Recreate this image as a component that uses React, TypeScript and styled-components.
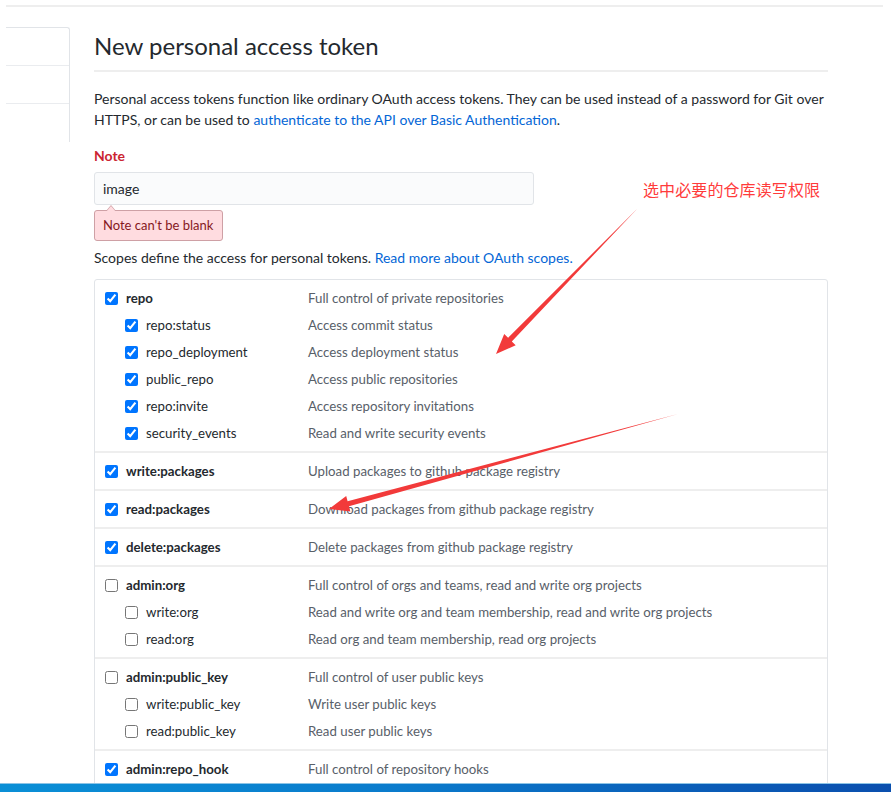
import React from "react";
import styled, { createGlobalStyle } from "styled-components";

const GlobalStyle = createGlobalStyle`
  html, body {
    margin: 0;
    padding: 0;
    background: #ffffff;
    overflow: hidden;
  }
  body {
    font-family: Lato, "Noto Sans", "Liberation Sans", sans-serif;
    font-size: 14px;
    color: #24292e;
  }
  * { box-sizing: border-box; }
`;

const Page = styled.div`
  display: flex;
  flex-direction: column;
  width: 891px;
  height: 801px;
`;

const Screen = styled.div`
  position: relative;
  height: 783px;
  overflow: hidden;
`;

const TopRule = styled.div`
  height: 2px;
  margin: 5px 8px 0 6px;
  background: #eeeeee;
`;

const Layout = styled.div`
  display: flex;
  align-items: flex-start;
  margin-top: 20px;
  padding-left: 6px;
`;

const Sidebar = styled.nav`
  width: 64px;
  border-top: 1px solid #e1e4e8;
  border-right: 1px solid #e1e4e8;
  border-top-right-radius: 3px;
  display: flex;
  flex-direction: column;
`;

const SideItem = styled.div<{ $last?: boolean }>`
  height: 38px;
  border-bottom: ${(p) => (p.$last ? "none" : "1px solid #eaecef")};
`;

const Main = styled.main`
  margin-left: 24px;
  padding-top: 1px;
  width: 734px;
`;

const Subhead = styled.div`
  border-bottom: 2px solid #eeeeee;
  padding-bottom: 6px;
  margin-bottom: 17px;
`;

const Title = styled.h2`
  margin: 0;
  font-size: 24px;
  font-weight: 400;
  line-height: 36px;
  color: #24292e;
`;

const Text = styled.p<{ $mb?: number }>`
  margin: 0 0 ${(p) => p.$mb ?? 10}px 0;
  font-size: 14px;
  line-height: 20.5px;
  color: #24292e;
`;

const Link = styled.a`
  color: #0366d6;
  text-decoration: none;
`;

const FormGroup = styled.div`
  margin: 15px 0 7px;
`;

const Label = styled.label`
  display: block;
  font-weight: 700;
  color: #cb2431;
  line-height: 21px;
  margin-bottom: 6px;
`;

const Input = styled.div`
  width: 440px;
  height: 33px;
  padding: 0 8px;
  display: flex;
  align-items: center;
  background: #fafbfc;
  border: 1px solid #e1e4e8;
  border-radius: 3px;
  font-size: 14px;
  color: #24292e;
`;

const ErrorNote = styled.div`
  position: relative;
  display: inline-block;
  margin-top: 5px;
  padding: 0 9px 0 8px;
  height: 31px;
  line-height: 29px;
  font-size: 13px;
  color: #86181d;
  background: #ffdce0;
  border: 1px solid #cea0a5;
  border-radius: 3px;

  &::before,
  &::after {
    content: "";
    position: absolute;
    left: 11px;
    border: 5px solid transparent;
    border-top: 0;
  }
  &::before {
    top: -6px;
    border-bottom: 6px solid #cea0a5;
  }
  &::after {
    top: -5px;
    border-bottom: 6px solid #ffdce0;
  }
`;

const ScopeBox = styled.div`
  border: 1px solid #e1e4e8;
  border-radius: 3px;
  font-size: 13.25px;
`;

const Group = styled.div`
  padding: 5px 0 4px;
  border-bottom: 2px solid #eeeeee;
`;

const Row = styled.div`
  display: grid;
  grid-template-columns: 203px 1fr;
  align-items: center;
  height: 27px;
  padding-left: 10px;
`;

const NameCell = styled.label<{ $child?: boolean }>`
  display: flex;
  align-items: center;
  gap: 8px;
  padding-left: ${(p) => (p.$child ? 20 : 0)}px;
  font-weight: ${(p) => (p.$child ? 400 : 700)};
  color: #24292e;
  white-space: nowrap;
`;

const Check = styled.input`
  width: 13px;
  height: 13px;
  margin: 0;
  accent-color: #0075ff;
`;

const Desc = styled.span`
  color: #586069;
  white-space: nowrap;
`;

const Overlay = styled.svg`
  position: absolute;
  left: 0;
  top: 0;
  pointer-events: none;
`;

const Annotation = styled.div`
  position: absolute;
  left: 643px;
  top: 178px;
  font-family: "Noto Sans CJK SC", sans-serif;
  font-size: 16px;
  line-height: 22px;
  color: #ff3b3b;
  letter-spacing: 0.1px;
`;

const Taskbar = styled.div`
  height: 9px;
  border-top: 1px solid #8cc4e6;
  background: linear-gradient(to right, #0a8fd6 0%, #0a7bcc 45%, #0a5cb7 80%, #0a4fae 100%);
`;

const BottomSpace = styled.div`
  flex: 1;
  background: #ffffff;
`;

type Scope = {
  name: string;
  desc: string;
  checked: boolean;
  children?: [string, string][];
};

const scopes: Scope[] = [
  {
    name: "repo",
    desc: "Full control of private repositories",
    checked: true,
    children: [
      ["repo:status", "Access commit status"],
      ["repo_deployment", "Access deployment status"],
      ["public_repo", "Access public repositories"],
      ["repo:invite", "Access repository invitations"],
      ["security_events", "Read and write security events"],
    ],
  },
  { name: "write:packages", desc: "Upload packages to github package registry", checked: true },
  { name: "read:packages", desc: "Download packages from github package registry", checked: true },
  { name: "delete:packages", desc: "Delete packages from github package registry", checked: true },
  {
    name: "admin:org",
    desc: "Full control of orgs and teams, read and write org projects",
    checked: false,
    children: [
      ["write:org", "Read and write org and team membership, read and write org projects"],
      ["read:org", "Read org and team membership, read org projects"],
    ],
  },
  {
    name: "admin:public_key",
    desc: "Full control of user public keys",
    checked: false,
    children: [
      ["write:public_key", "Write user public keys"],
      ["read:public_key", "Read user public keys"],
    ],
  },
  { name: "admin:repo_hook", desc: "Full control of repository hooks", checked: true },
];

type Pt = [number, number];

function arrowPoints(start: Pt, tip: Pt, headLen: number, headW: number, shaftW: number): string {
  const dx = tip[0] - start[0];
  const dy = tip[1] - start[1];
  const len = Math.hypot(dx, dy);
  const ux = dx / len;
  const uy = dy / len;
  const px = -uy;
  const py = ux;
  const bx = tip[0] - ux * headLen;
  const by = tip[1] - uy * headLen;
  const pts: Pt[] = [
    start,
    [bx + px * shaftW, by + py * shaftW],
    [bx + px * headW, by + py * headW],
    tip,
    [bx - px * headW, by - py * headW],
    [bx - px * shaftW, by - py * shaftW],
  ];
  return pts.map((p) => `${p[0].toFixed(1)},${p[1].toFixed(1)}`).join(" ");
}

export default function App() {
  return (
    <>
      <GlobalStyle />
      <Page>
        <Screen>
          <TopRule />
          <Layout>
            <Sidebar>
              <SideItem />
              <SideItem />
              <SideItem $last />
            </Sidebar>
            <Main>
              <Subhead>
                <Title>New personal access token</Title>
              </Subhead>
              <Text $mb={0}>
                Personal access tokens function like ordinary OAuth access tokens. They can be used instead of a
                password for Git over HTTPS, or can be used to{" "}
                <Link href="#">authenticate to the API over Basic Authentication</Link>.
              </Text>
              <FormGroup>
                <Label>Note</Label>
                <Input>image</Input>
                <ErrorNote>Note can't be blank</ErrorNote>
              </FormGroup>
              <Text>
                Scopes define the access for personal tokens. <Link href="#">Read more about OAuth scopes.</Link>
              </Text>
              <ScopeBox>
                {scopes.map((s) => (
                  <Group key={s.name}>
                    <Row>
                      <NameCell>
                        <Check type="checkbox" checked={s.checked} readOnly />
                        {s.name}
                      </NameCell>
                      <Desc>{s.desc}</Desc>
                    </Row>
                    {s.children?.map(([n, d]) => (
                      <Row key={n}>
                        <NameCell $child>
                          <Check type="checkbox" checked={s.checked} readOnly />
                          {n}
                        </NameCell>
                        <Desc>{d}</Desc>
                      </Row>
                    ))}
                  </Group>
                ))}
              </ScopeBox>
            </Main>
          </Layout>
          <Annotation>选中必要的仓库读写权限</Annotation>
          <Overlay width="891" height="783" viewBox="0 0 891 783">
            <polygon points={arrowPoints([637, 209], [496, 354], 20, 8, 2.6)} fill="#f23a3a" />
            <polygon points={arrowPoints([678, 414], [329, 509], 20, 8, 2.6)} fill="#f23a3a" />
          </Overlay>
        </Screen>
        <Taskbar />
        <BottomSpace />
      </Page>
    </>
  );
}
